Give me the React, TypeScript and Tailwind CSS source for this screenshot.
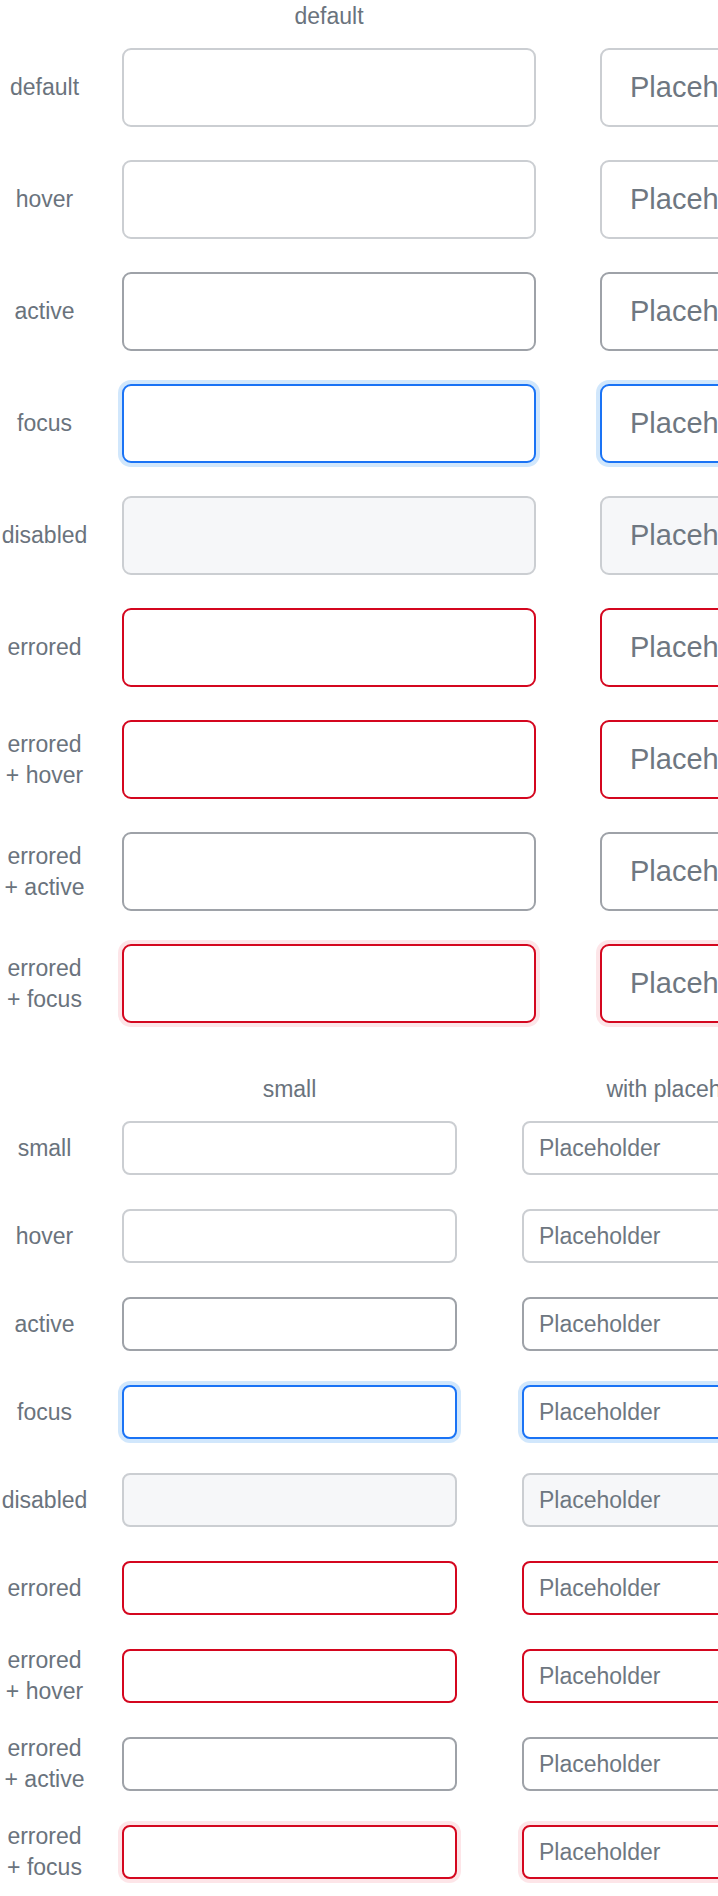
import React from "react";

type State =
  | "default"
  | "hover"
  | "active"
  | "focus"
  | "disabled"
  | "errored"
  | "errored-hover"
  | "errored-active"
  | "errored-focus";

const rows: { label: string[]; state: State }[] = [
  { label: ["default"], state: "default" },
  { label: ["hover"], state: "hover" },
  { label: ["active"], state: "active" },
  { label: ["focus"], state: "focus" },
  { label: ["disabled"], state: "disabled" },
  { label: ["errored"], state: "errored" },
  { label: ["errored", "+ hover"], state: "errored-hover" },
  { label: ["errored", "+ active"], state: "errored-active" },
  { label: ["errored", "+ focus"], state: "errored-focus" },
];

const stateClass: Record<State, string> = {
  default: "border-[#cbced2] bg-white",
  hover: "border-[#cbced2] bg-white",
  active: "border-[#9ea2a8] bg-white",
  focus: "border-[#1a73f5] bg-white shadow-[0_0_0_4px_#d1e7fc]",
  disabled: "border-[#cbced2] bg-[#f6f7f9]",
  errored: "border-[#d4071f] bg-white",
  "errored-hover": "border-[#d4071f] bg-white",
  "errored-active": "border-[#9ea2a8] bg-white",
  "errored-focus": "border-[#d4071f] bg-white shadow-[0_0_0_4px_#fde5e8]",
};

function Field({
  state,
  big,
  placeholder,
}: {
  state: State;
  big: boolean;
  placeholder?: string;
}) {
  const size = big
    ? "w-[414px] h-[79px] rounded-[9px] text-[29px] pl-[28px]"
    : "w-[335px] h-[54px] rounded-[8px] text-[23px] pl-[15px]";
  return (
    <input
      readOnly
      tabIndex={-1}
      disabled={state === "disabled"}
      placeholder={placeholder}
      className={
        "block shrink-0 border-2 outline-none font-['Liberation_Sans',Arial,sans-serif] text-[#24292f] placeholder:text-[#6e7781] " +
        size +
        " " +
        stateClass[state]
      }
    />
  );
}

function Label({ lines }: { lines: string[] }) {
  return (
    <div className="w-[89px] shrink-0 text-center text-[23px] leading-[31px] text-[#6a737d]">
      {lines.map((l, i) => (
        <div key={i}>{l}</div>
      ))}
    </div>
  );
}

export default function App() {
  return (
    <div className="w-[718px] h-[1896px] overflow-hidden bg-white font-['Liberation_Sans',Arial,sans-serif]">
      {/* big section */}
      <div className="flex flex-col">
        <div className="flex h-[32px] items-center text-[23px] leading-[31px] text-[#6a737d]">
          <div className="w-[89px] shrink-0" />
          <div className="ml-[33px] w-[414px] shrink-0 text-center">default</div>
        </div>
        <div className="mt-[16px] flex flex-col gap-[33px]">
          {rows.map((r) => (
            <div key={r.state} className="flex h-[79px] items-center">
              <Label lines={r.label} />
              <div className="ml-[33px]">
                <Field state={r.state} big />
              </div>
              <div className="ml-[64px]">
                <Field state={r.state} big placeholder="Placeholder" />
              </div>
            </div>
          ))}
        </div>
      </div>

      {/* small section */}
      <div className="mt-[50px] flex flex-col">
        <div className="flex h-[32px] items-center text-[23px] leading-[31px] text-[#6a737d]">
          <div className="w-[89px] shrink-0" />
          <div className="ml-[33px] w-[335px] shrink-0 text-center">small</div>
          <div className="ml-[65px] w-[335px] shrink-0 text-center">with placeholder</div>
        </div>
        <div className="mt-[16px] flex flex-col gap-[34px]">
          {rows.map((r) => (
            <div key={r.state} className="flex h-[54px] items-center">
              <Label lines={r.state === "default" ? ["small"] : r.label} />
              <div className="ml-[33px]">
                <Field state={r.state} big={false} />
              </div>
              <div className="ml-[65px]">
                <Field state={r.state} big={false} placeholder="Placeholder" />
              </div>
            </div>
          ))}
        </div>
      </div>
    </div>
  );
}
